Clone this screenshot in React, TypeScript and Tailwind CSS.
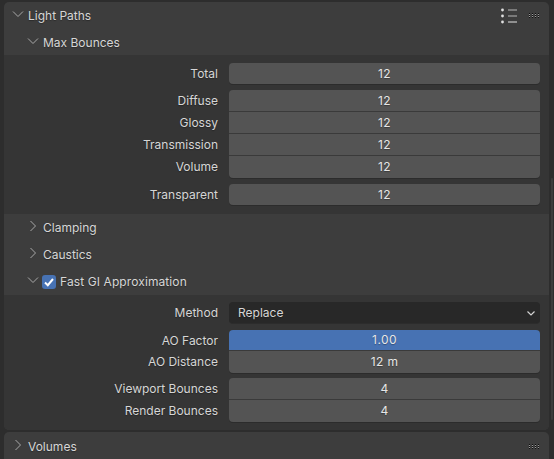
import React from 'react';

const Chevron = ({ open, className }: { open: boolean; className?: string }) => (
  <svg width="12" height="12" viewBox="0 0 12 12" fill="none" className={'-translate-y-[2px] ' + (className || '')}>
    <path
      d={open ? 'M1 3.5L6 8.5L11 3.5' : 'M3.5 1L8.5 6L3.5 11'}
      stroke="#a8a8a8"
      strokeWidth="1"
    />
  </svg>
);

const Grip = () => (
  <svg width="11" height="5" viewBox="0 0 11 5" className="block">
    {[0, 3, 6, 9].map((x) =>
      [0, 1, 2, 3, 4].map((y) => (
        <rect key={x + '-' + y} x={x} y={y} width="1" height="1" fill={y % 2 === 0 ? '#0f0f0f' : '#9a9a9a'} />
      )),
    )}
  </svg>
);

const Label = ({ text }: { text: string }) => (
  <div className="w-[225px] pr-[11px] text-right text-[#d6d6d6] shrink-0">{text}</div>
);

const Field = ({ label, value, pos }: { label: string; value: string; pos: 'one' | 'top' | 'mid' | 'bottom' }) => {
  const rounded =
    pos === 'one'
      ? 'rounded h-[21px] shadow-[0_1px_0_#2c2c2c]'
      : pos === 'top'
        ? 'rounded-t h-[22px] border-b border-[#3a3a3a]'
        : pos === 'bottom'
          ? 'rounded-b h-[22px] shadow-[0_1px_0_#2c2c2c]'
          : 'h-[22px] border-b border-[#3a3a3a]';
  return (
    <div className="flex items-center">
      <Label text={label} />
      <div className={'w-[311px] flex items-center justify-center bg-[#545454] text-[#e6e6e6] tracking-[0.4px] ' + rounded}>
        {value}
      </div>
    </div>
  );
};

const SubHeader = ({ title, open, check, top }: { title: string; open: boolean; check?: boolean; top?: string }) => (
  <div className={'h-[27px] flex items-center pl-[23px] text-[#d6d6d6] ' + (top || 'pt-[1px]')}>
    <Chevron open={open} className="mr-[4px]" />
    {check && (
      <div className="w-[14px] h-[14px] rounded-[3px] bg-[#4772b3] flex items-center justify-center mr-[4px] ml-[-1px]">
        <svg width="12" height="12" viewBox="0 0 12 12" fill="none">
          <path d="M2 6.5L4.8 9.2L10 3" stroke="#ffffff" strokeWidth="2" />
        </svg>
      </div>
    )}
    <span className={check ? 'tracking-[0.1px]' : ''}>{title}</span>
  </div>
);

export default function App() {
  return (
    <div className="w-[554px] h-[459px] overflow-hidden bg-[#2d2d2d] pt-[2px] pl-[4px] font-['Inter','Liberation_Sans',sans-serif] text-[12px] relative [text-shadow:0_1px_1px_#0000004d]">
      <div className="w-[545px] rounded-[5px] overflow-hidden bg-[#3d3d3d]">
        <div className="h-[26px] pt-[1px] flex items-center pl-[8px] pr-[9px] text-[#d6d6d6]">
          <Chevron open className="mr-[4px]" />
          <span className="flex-1">Light Paths</span>
          <svg width="18" height="18" viewBox="0 0 18 18" className="mr-[11px]">
            <circle cx="2.5" cy="3" r="1.4" fill="#e0e0e0" />
            <circle cx="2.5" cy="9" r="1.4" fill="#e0e0e0" />
            <circle cx="2.5" cy="15" r="1.4" fill="#e0e0e0" />
            <rect x="8" y="2.5" width="9" height="1" fill="#b8b8b8" />
            <rect x="8" y="8.5" width="9" height="1" fill="#b8b8b8" />
            <rect x="8" y="14" width="9" height="2" fill="#909090" />
          </svg>
          <Grip />
        </div>
        <SubHeader title="Max Bounces" open top="pt-[2px]" />
        <div className="bg-[#353535] pt-[8px] pb-[9px] flex flex-col">
          <Field label="Total" value="12" pos="one" />
          <div className="h-[6px]" />
          <Field label="Diffuse" value="12" pos="top" />
          <Field label="Glossy" value="12" pos="mid" />
          <Field label="Transmission" value="12" pos="mid" />
          <Field label="Volume" value="12" pos="bottom" />
          <div className="h-[6px]" />
          <Field label="Transparent" value="12" pos="one" />
        </div>
        <SubHeader title="Clamping" open={false} />
        <SubHeader title="Caustics" open={false} />
        <SubHeader title="Fast GI Approximation" open check />
        <div className="bg-[#353535] pt-[7px] pb-[8px] flex flex-col">
          <div className="flex items-center">
            <Label text="Method" />
            <div className="w-[311px] h-[21px] rounded bg-[#282828] text-[#d6d6d6] flex items-center justify-between pl-[9px] pr-[4px] shadow-[0_1px_0_#2c2c2c]">
              Replace
              <svg width="10" height="10" viewBox="0 0 10 10" fill="none">
                <path d="M1.5 3.5L5 7L8.5 3.5" stroke="#d2d2d2" strokeWidth="1.2" />
              </svg>
            </div>
          </div>
          <div className="h-[7px]" />
          <div className="flex items-center">
            <Label text="AO Factor" />
            <div className="w-[311px] h-[21px] rounded-t bg-[#4772b3] text-[#e6e6e6] tracking-[0.4px] border-b border-[#3a3a3a] flex items-center justify-center">
              1.00
            </div>
          </div>
          <Field label="AO Distance" value="12 m" pos="bottom" />
          <div className="h-[5px]" />
          <Field label="Viewport Bounces" value="4" pos="top" />
          <Field label="Render Bounces" value="4" pos="bottom" />
        </div>
      </div>
      <div className="w-[545px] mt-[2px] h-[30px] rounded-t-[5px] bg-[#3d3d3d] flex items-center pl-[8px] pr-[9px] pb-[1px] text-[#d6d6d6]">
        <Chevron open={false} className="mr-[4px]" />
        <span className="flex-1">Volumes</span>
        <Grip />
      </div>
      {/* scrollbar thumb */}
      <div className="absolute right-[1px] top-[178px] w-[2px] h-[242px] rounded-full bg-[#3c3c3c]" />
    </div>
  );
}
